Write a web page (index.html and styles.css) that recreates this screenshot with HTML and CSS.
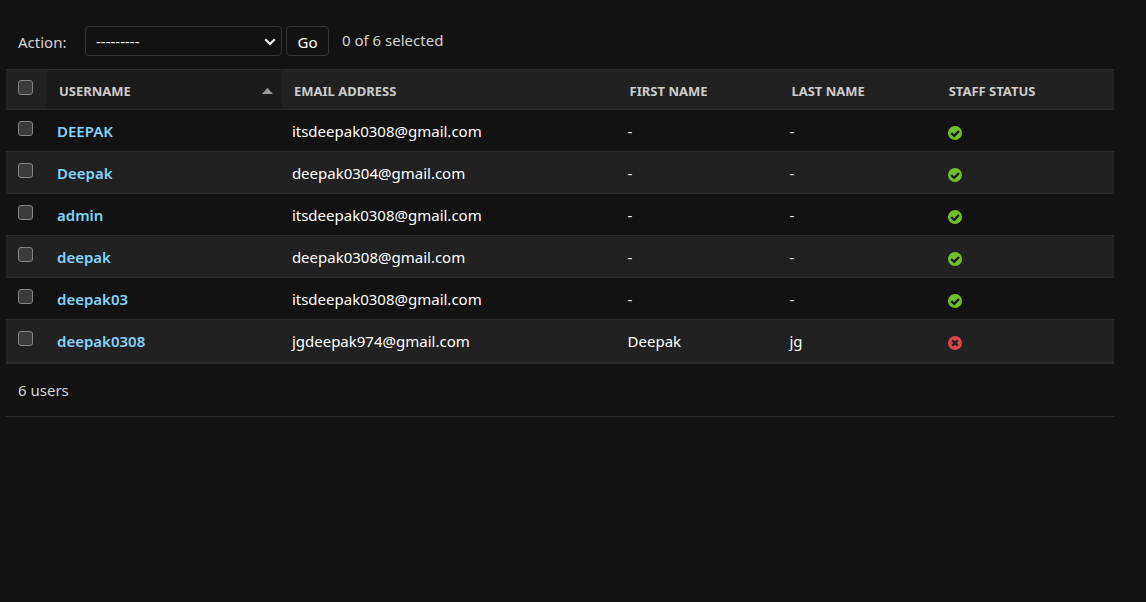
FILE: index.html
```
<!DOCTYPE html>
<html lang="en">
<head>
<meta charset="utf-8">
<title>Select user to change</title>
<link rel="stylesheet" href="styles.css">
</head>
<body>
<svg class="defs" aria-hidden="true">
  <symbol id="yes" viewBox="0 0 14 14"><circle cx="7" cy="7" r="7" fill="#70bf2b"/><path d="M3.2 7 6.2 9.8 11 5" fill="none" stroke="#181818" stroke-width="2.3"/></symbol>
  <symbol id="no" viewBox="0 0 14 14"><circle cx="7" cy="7" r="7" fill="#dd4646"/><path d="M4.3 4.3 9.7 9.7M9.7 4.3 4.3 9.7" fill="none" stroke="#222" stroke-width="2.4"/></symbol>
</svg>
<main class="changelist">
  <form>
    <div class="actions">
      <label class="action-label" for="action">Action:</label>
      <span class="select-wrap">
        <select id="action" class="action-select"><option>---------</option></select>
        <svg class="chevron" viewBox="0 0 12 8" aria-hidden="true"><path d="M1.2 1.2 6 6 10.8 1.2" fill="none" stroke="#eee" stroke-width="2.2"/></svg>
      </span>
      <button class="go" type="button">Go</button>
      <span class="counter">0 of 6 selected</span>
    </div>
    <table class="results">
      <colgroup><col class="col-check"><col class="col-user"><col class="col-email"><col class="col-first"><col class="col-last"><col class="col-staff"></colgroup>
      <thead>
        <tr>
          <th class="check"><input type="checkbox" aria-label="Select all users"></th>
          <th class="sorted"><div class="sort-head"><a href="#">Username</a><svg class="arrow" viewBox="0 0 11 6" aria-hidden="true"><path d="M0 6 5.5 0 11 6z" fill="#999"/></svg></div></th>
          <th><a href="#">Email address</a></th>
          <th><a href="#">First name</a></th>
          <th><a href="#">Last name</a></th>
          <th><a href="#">Staff status</a></th>
        </tr>
      </thead>
      <tbody>
        <tr><td class="check"><input type="checkbox" aria-label="Select DEEPAK"></td><td><a class="user" href="#">DEEPAK</a></td><td>itsdeepak0308@gmail.com</td><td>-</td><td>-</td><td><svg class="status" role="img" aria-label="True"><use href="#yes"/></svg></td></tr>
        <tr><td class="check"><input type="checkbox" aria-label="Select Deepak"></td><td><a class="user" href="#">Deepak</a></td><td>deepak0304@gmail.com</td><td>-</td><td>-</td><td><svg class="status" role="img" aria-label="True"><use href="#yes"/></svg></td></tr>
        <tr><td class="check"><input type="checkbox" aria-label="Select admin"></td><td><a class="user" href="#">admin</a></td><td>itsdeepak0308@gmail.com</td><td>-</td><td>-</td><td><svg class="status" role="img" aria-label="True"><use href="#yes"/></svg></td></tr>
        <tr><td class="check"><input type="checkbox" aria-label="Select deepak"></td><td><a class="user" href="#">deepak</a></td><td>deepak0308@gmail.com</td><td>-</td><td>-</td><td><svg class="status" role="img" aria-label="True"><use href="#yes"/></svg></td></tr>
        <tr><td class="check"><input type="checkbox" aria-label="Select deepak03"></td><td><a class="user" href="#">deepak03</a></td><td>itsdeepak0308@gmail.com</td><td>-</td><td>-</td><td><svg class="status" role="img" aria-label="True"><use href="#yes"/></svg></td></tr>
        <tr><td class="check"><input type="checkbox" aria-label="Select deepak0308"></td><td><a class="user" href="#">deepak0308</a></td><td>jgdeepak974@gmail.com</td><td>Deepak</td><td>jg</td><td><svg class="status" role="img" aria-label="False"><use href="#no"/></svg></td></tr>
      </tbody>
    </table>
    <p class="paginator">6 users</p>
  </form>
</main>
</body>
</html>
```
FILE: styles.css
```
* { box-sizing: border-box; }
body {
  margin: 0;
  background: #121212;
  color: #fff;
  font: 15px/20px "Segoe UI", "Noto Sans", "Open Sans", sans-serif;
}
.defs { position: absolute; width: 0; height: 0; }
.changelist { padding: 26px 32px 0 6px; }
.actions {
  display: flex;
  align-items: center;
  padding: 0 12px 13px;
  color: #d4d4d4;
}
.action-label { width: 67px; padding-top: 2px; }
.select-wrap { position: relative; width: 197px; }
.action-select {
  appearance: none;
  display: block;
  width: 100%;
  height: 30px;
  padding: 0 10px;
  border: 1px solid #353535;
  border-radius: 4px;
  background: #121212;
  color: #fff;
  font: inherit;
}
.chevron {
  position: absolute;
  top: 12px;
  right: 6px;
  width: 12px;
  height: 8px;
  pointer-events: none;
}
.go {
  width: 43px;
  height: 30px;
  margin: 0 13px 0 4px;
  padding: 2px 0 0;
  border: 1px solid #353535;
  border-radius: 4px;
  background: #121212;
  color: #fff;
  font: inherit;
}
.counter { padding-bottom: 2px; }
.results {
  width: 100%;
  table-layout: fixed;
  border-collapse: separate;
  border-spacing: 0;
  border-bottom: 2px solid #2a2a2a;
}
.col-check { width: 41px; }
.col-user { width: 21.2%; }
.col-email { width: 30.3%; }
.col-first { width: 14.6%; }
.col-last { width: 14.2%; }
th, td { padding: 0 10px; text-align: left; border-bottom: 1px solid #2a2a2a; }
th {
  height: 41px;
  padding: 2px 12px 0;
  border-top: 1px solid #2a2a2a;
  background: #212121;
  font-size: 13px;
  font-weight: 700;
  text-transform: uppercase;
}
th a { color: #ccc; text-decoration: none; }
.sorted { background: #1b1b1b; padding-right: 9px; }
.sort-head { display: flex; align-items: center; justify-content: space-between; }
.arrow { width: 11px; height: 6px; }
td { height: 42px; }
tbody tr:nth-child(even) { background: #212121; }
tbody tr:last-child td { border-bottom: 0; }
.check { padding: 11px 12px; vertical-align: top; }
th.check { padding-top: 10px; }
.check input {
  appearance: none;
  display: block;
  width: 15px;
  height: 15px;
  margin: 0;
  border: 1px solid #858585;
  border-radius: 3px;
  background: #3b3b3b;
}
.user { color: #81d4fa; font-weight: 600; text-decoration: none; }
.status { display: block; width: 14px; height: 14px; margin: 4px 0 0 1px; }
.paginator {
  margin: 0;
  padding: 16px 12px;
  border-bottom: 1px solid #2a2a2a;
  color: #d4d4d4;
}
```
